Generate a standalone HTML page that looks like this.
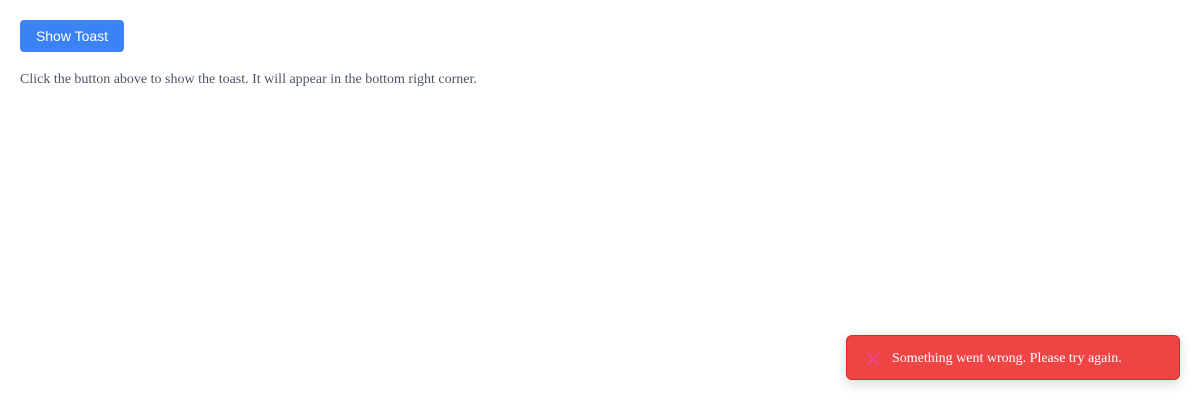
<!DOCTYPE html>
<html><head><meta charset="utf-8"><style>
html,body{margin:0;width:1200px;height:400px;background:#fff;overflow:hidden;position:relative}
.btn{position:absolute;left:20px;top:20px;width:104px;height:32px;background:#3b82f6;border-radius:4px;color:#fff;font:14px "Liberation Sans",sans-serif;display:flex;align-items:center;justify-content:center}
p{position:absolute;left:20px;top:72px;margin:0;font:14px "Liberation Serif",serif;color:#4b5563}
.toast{position:absolute;left:846px;top:335px;width:332px;height:43px;background:#ef4444;border:1px solid #dc2626;border-radius:6px;box-shadow:0 4px 12px rgba(0,0,0,.15);color:#fff;font:14px "Liberation Serif",serif;display:flex;align-items:center}
.toast span{position:relative;top:1px}
.toast svg{margin-left:19px;margin-right:12px;position:relative;top:1px}
</style></head><body>
<div class="btn">Show Toast</div>
<p>Click the button above to show the toast. It will appear in the bottom right corner.</p>
<div class="toast"><svg width="14" height="14" viewBox="0 0 14 14"><path d="M1 1L13 13M13 1L1 13" stroke="#ec4899" stroke-width="1.6"/></svg><span>Something went wrong. Please try again.</span></div>
</body></html>
